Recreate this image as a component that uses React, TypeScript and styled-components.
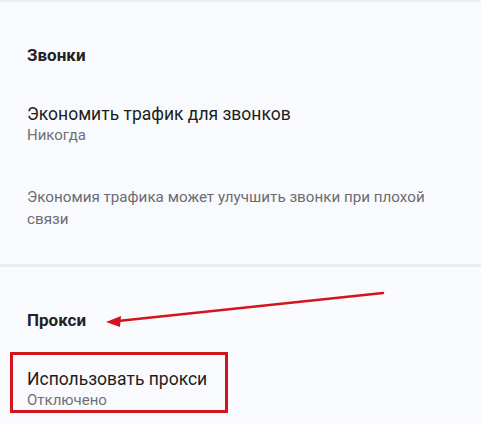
import React from "react";
import styled, { createGlobalStyle } from "styled-components";

const Global = createGlobalStyle`
  html, body { margin: 0; padding: 0; background: #f9fafe; }
  body { font-family: Roboto, "Noto Sans", sans-serif; }
`;

const Page = styled.div`
  position: relative;
  width: 481px;
  height: 424px;
  overflow: hidden;
  background: #f9fafe;
  border-top: 2px solid #eeeff3;
  box-sizing: border-box;
`;

const Section = styled.section<{ $pt: number }>`
  display: flex;
  flex-direction: column;
  padding: ${(p) => p.$pt}px 27px 0 27px;
`;

const Header = styled.h2`
  margin: 0;
  font-size: 17px;
  font-weight: 700;
  color: #222226;
  line-height: 20px;
`;

const Item = styled.div<{ $mt: number }>`
  display: flex;
  flex-direction: column;
  margin-top: ${(p) => p.$mt}px;
`;

const Title = styled.div`
  font-size: 17.5px;
  color: #1d1d20;
  line-height: 22px;
`;

const Sub = styled.div`
  font-size: 15px;
  color: #707075;
  line-height: 20px;
`;

const Note = styled.p`
  margin: 41px 0 0 0;
  font-size: 15.2px;
  line-height: 22px;
  color: #6c6c71;
  width: 424px;
`;

const Divider = styled.div`
  height: 3px;
  background: #ebecf0;
  margin-top: 34px;
`;

const Marked = styled.div`
  display: flex;
  flex-direction: column;
  margin: 22px 0 0 10px;
  width: 218px;
  box-sizing: border-box;
  border: 3px solid #d3141d;
  padding: 13px 14px 0 14px;
`;

const Arrow = styled.svg`
  position: absolute;
  left: 0;
  top: 0;
  pointer-events: none;
`;

export default function App() {
  return (
    <Page>
      <Global />
      <Section $pt={43}>
        <Header>Звонки</Header>
        <Item $mt={38}>
          <Title>Экономить трафик для звонков</Title>
          <Sub>Никогда</Sub>
        </Item>
        <Note>Экономия трафика может улучшить звонки при плохой связи</Note>
      </Section>
      <Divider />
      <Section $pt={43}>
        <Header>Прокси</Header>
      </Section>
      <Marked>
        <Title>Использовать прокси</Title>
        <Sub>Отключено</Sub>
      </Marked>
      <Arrow width="481" height="424" viewBox="0 0 481 424">
        <line x1="383" y1="291" x2="118" y2="319" stroke="#d3141d" strokeWidth="2.5" strokeLinecap="round" />
        <polygon points="106,320 121,314 120,325" fill="#d3141d" />
      </Arrow>
    </Page>
  );
}
